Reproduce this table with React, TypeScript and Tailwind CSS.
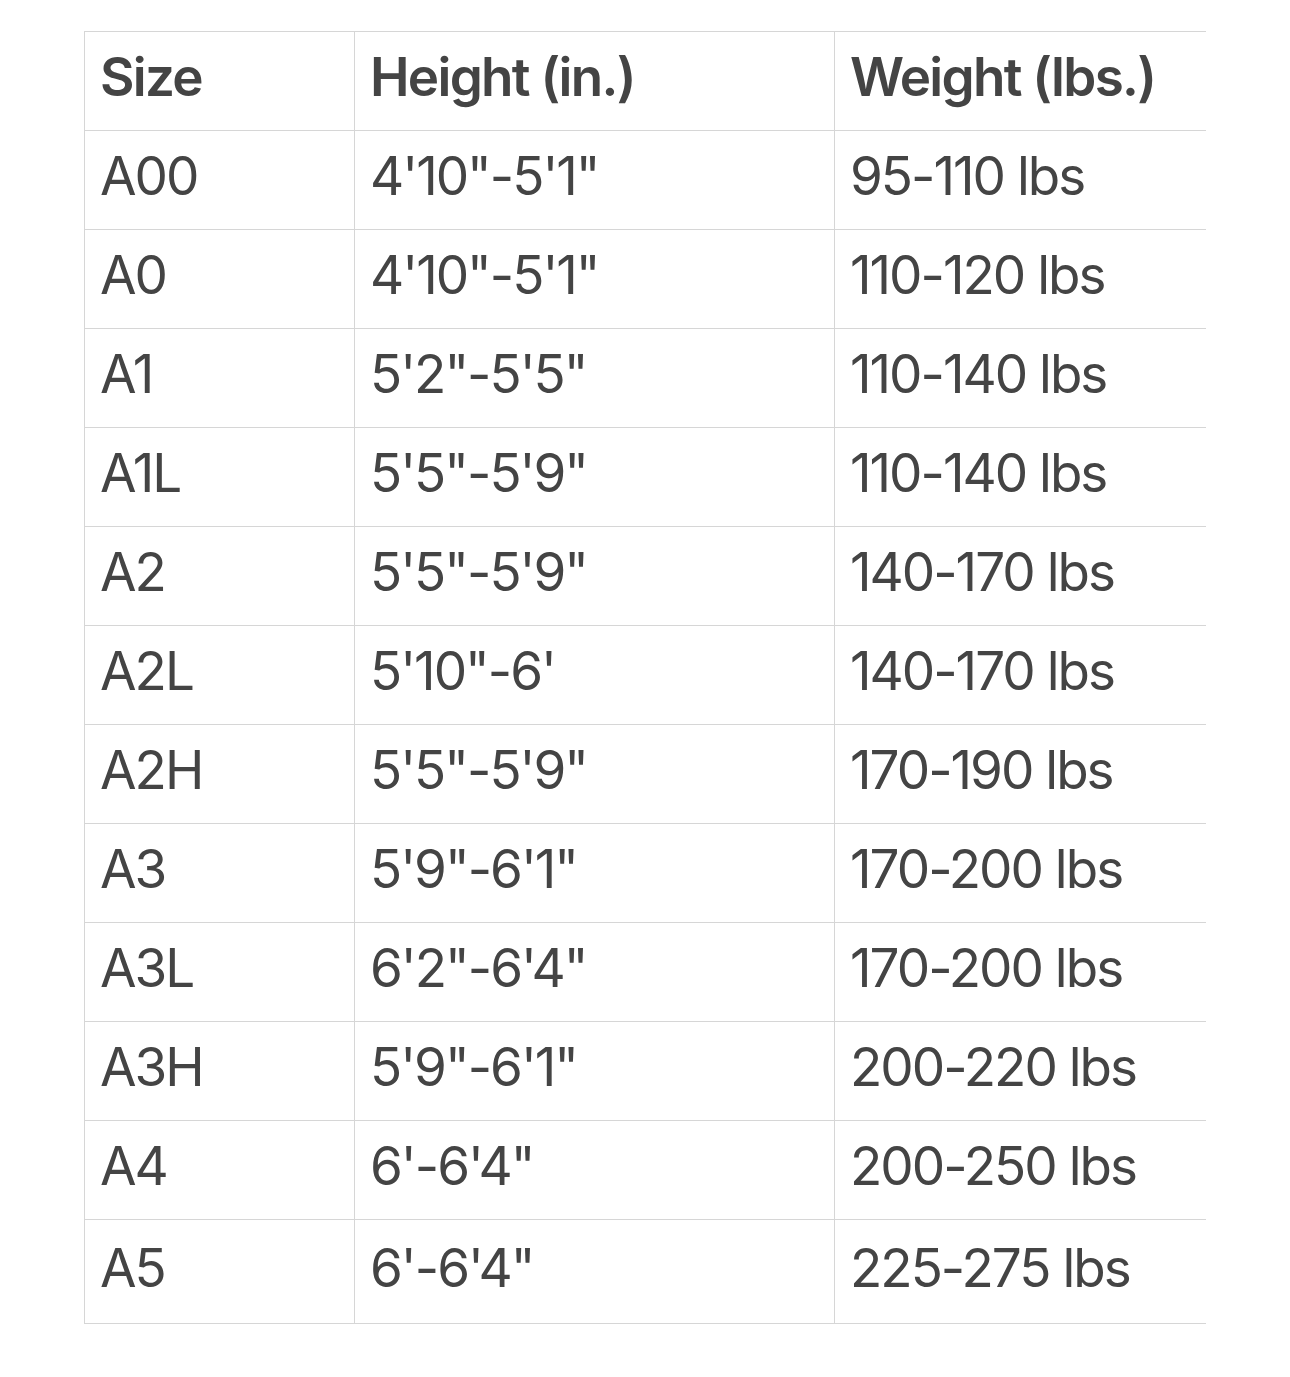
const rows = [
  ["A00", "4'10\"-5'1\"", "95-110 lbs"],
  ["A0", "4'10\"-5'1\"", "110-120 lbs"],
  ["A1", "5'2\"-5'5\"", "110-140 lbs"],
  ["A1L", "5'5\"-5'9\"", "110-140 lbs"],
  ["A2", "5'5\"-5'9\"", "140-170 lbs"],
  ["A2L", "5'10\"-6'", "140-170 lbs"],
  ["A2H", "5'5\"-5'9\"", "170-190 lbs"],
  ["A3", "5'9\"-6'1\"", "170-200 lbs"],
  ["A3L", "6'2\"-6'4\"", "170-200 lbs"],
  ["A3H", "5'9\"-6'1\"", "200-220 lbs"],
  ["A4", "6'-6'4\"", "200-250 lbs"],
  ["A5", "6'-6'4\"", "225-275 lbs"],
];

export default function App() {
  return (
    <div className="min-h-[1377px] bg-white pl-[84px] pt-[31px] font-['Inter',sans-serif] text-[#444444]">
      <table className="w-[1122px] border-collapse">
        <thead>
          <tr className="h-[99px]">
            <th className="w-[270px] border-t border-l border-[#d6d6d6] pb-[6px] pl-[15px] text-left align-middle text-[53px] font-semibold tracking-[-1.7px]">
              Size
            </th>
            <th className="w-[480px] border-t border-l border-[#d6d6d6] pb-[6px] pl-[15px] text-left align-middle text-[53px] font-semibold tracking-[-1.7px]">
              Height (in.)
            </th>
            <th className="border-t border-l border-[#d6d6d6] pb-[6px] pl-[15px] text-left align-middle text-[53px] font-semibold tracking-[-1.7px]">
              Weight (lbs.)
            </th>
          </tr>
        </thead>
        <tbody>
          {rows.map((r, i) => (
            <tr
              key={r[0]}
              className={i === rows.length - 1 ? "h-[104px] border-b border-[#d6d6d6]" : "h-[99px]"}
            >
              {r.map((c, j) => (
                <td
                  key={j}
                  className="border-t border-l border-[#d6d6d6] pb-[6px] pl-[15px] text-left align-middle text-[53px] font-normal tracking-[-2px]"
                >
                  {c}
                </td>
              ))}
            </tr>
          ))}
        </tbody>
      </table>
    </div>
  );
}
